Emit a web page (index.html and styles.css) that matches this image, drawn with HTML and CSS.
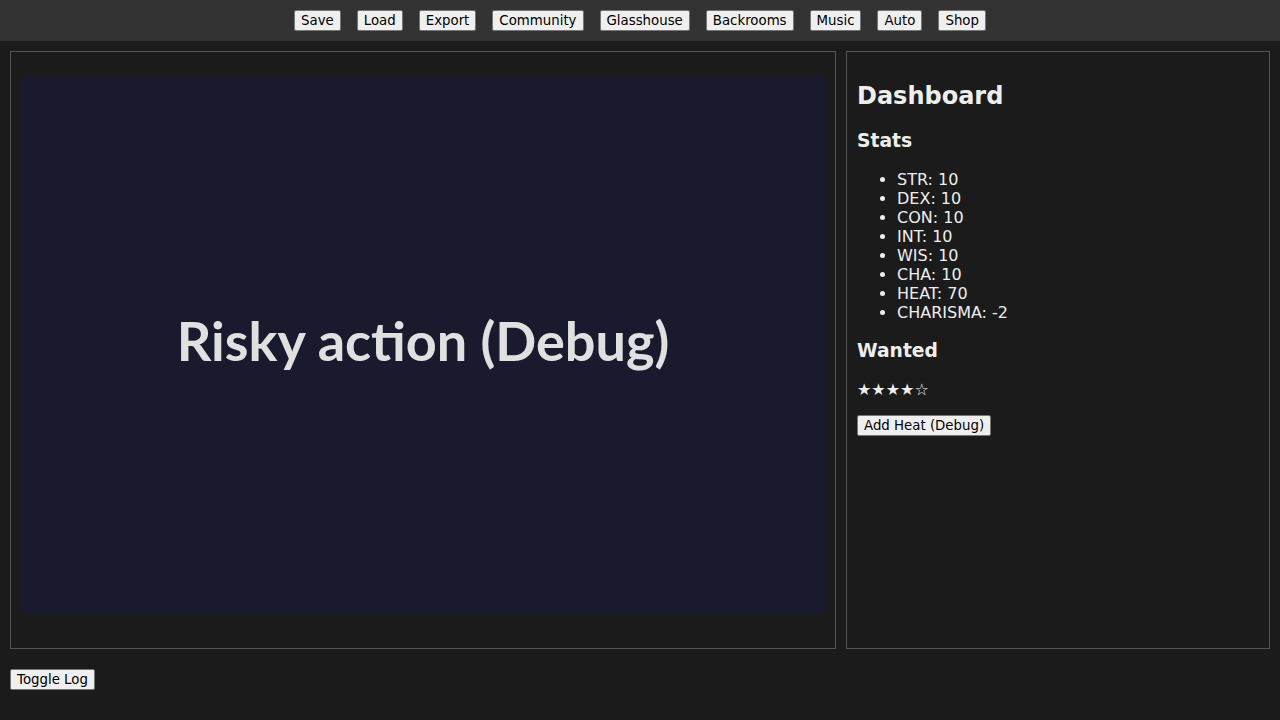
FILE: index.html
```html
<!DOCTYPE html>
<html lang="en">
<head>
<meta charset="utf-8">
<title>Dashboard</title>
<link rel="stylesheet" href="styles.css">
</head>
<body>
<header class="topbar">
  <button class="btn">Save</button>
  <button class="btn">Load</button>
  <button class="btn">Export</button>
  <button class="btn">Community</button>
  <button class="btn">Glasshouse</button>
  <button class="btn">Backrooms</button>
  <button class="btn">Music</button>
  <button class="btn">Auto</button>
  <button class="btn">Shop</button>
</header>
<main class="layout">
  <section class="stage">
    <div class="scene"><span class="scene-title">Risky action (Debug)</span></div>
  </section>
  <aside class="dashboard">
    <h2 class="dash-title">Dashboard</h2>
    <h3 class="dash-sub">Stats</h3>
    <ul class="stat-list">
      <li>STR: 10</li>
      <li>DEX: 10</li>
      <li>CON: 10</li>
      <li>INT: 10</li>
      <li>WIS: 10</li>
      <li>CHA: 10</li>
      <li>HEAT: 70</li>
      <li>CHARISMA: -2</li>
    </ul>
    <h3 class="dash-sub">Wanted</h3>
    <p class="stars">★★★★☆</p>
    <div><button class="btn">Add Heat (Debug)</button></div>
  </aside>
</main>
<footer class="footer">
  <button class="btn">Toggle Log</button>
</footer>
</body>
</html>
```
FILE: styles.css
```css
html, body {
  margin: 0;
  background: #1b1b1b;
  color: #eeeeee;
  font-family: "DejaVu Sans", sans-serif;
}

.btn {
  font-family: "DejaVu Sans", sans-serif;
  font-size: 13.333px;
  color: #000;
  background: #efefef;
  border: 1px solid #767676;
  border-radius: 2px;
  padding: 2px 6px;
  margin: 0;
  line-height: normal;
}

.topbar {
  background: #333333;
  height: 41px;
  display: flex;
  justify-content: center;
  align-items: center;
  gap: 16px;
  box-sizing: border-box;
}

.layout {
  display: grid;
  grid-template-columns: 1fr 424px;
  gap: 10px;
  padding: 10px 10px 0;
  height: 598px;
}

.stage {
  border: 1px solid #555555;
  padding: 25px 10px 34px;
  display: flex;
}

.scene {
  flex: 1;
  background: #1a1a2e;
  display: flex;
  align-items: center;
  justify-content: center;
  padding-bottom: 10px;
}

.scene-title {
  font-family: Lato, sans-serif;
  font-weight: 700;
  font-size: 54px;
  color: #e0e0e0;
}

.dashboard {
  border: 1px solid #555555;
  padding: 10px;
}

.dash-title {
  font-size: 24px;
  margin: 20px 0;
}

.dash-sub {
  font-size: 18.72px;
  margin: 18.72px 0;
}

.stat-list {
  margin: 16px 0;
  padding-left: 40px;
  font-size: 16px;
}

.stars {
  font-size: 16px;
  margin: 16px 0;
}

.footer {
  padding: 20px 10px;
}
```
